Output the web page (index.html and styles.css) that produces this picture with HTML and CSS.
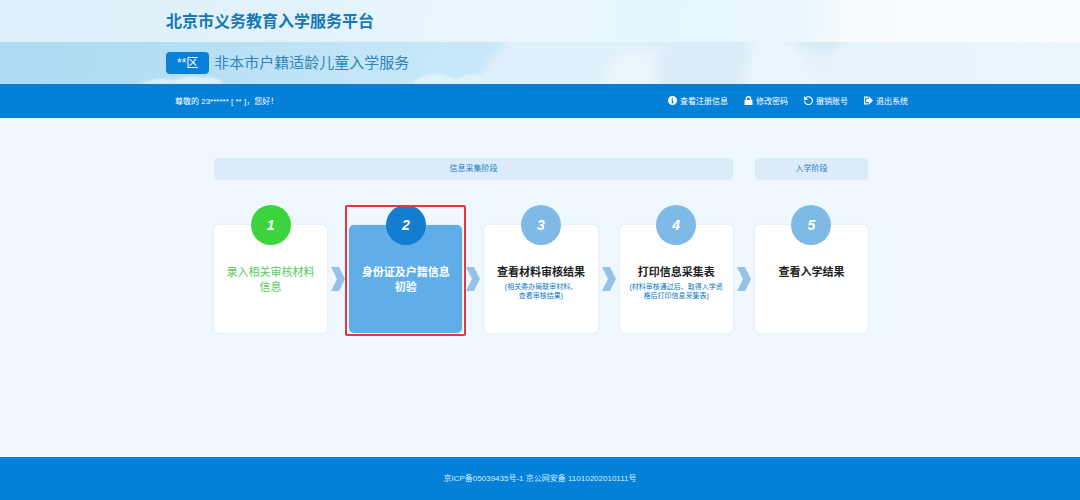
FILE: index.html
```html
<!DOCTYPE html>
<html lang="zh-CN">
<head>
    <meta charset="UTF-8">
    <meta name="viewport" content="width=device-width, initial-scale=1.0">
    <title>北京市义务教育入学服务平台</title>
    <link rel="stylesheet" href="styles.css">
</head>
<body>
    <header class="header">
        <div class="site-bar">
            <h1 class="wrap site-title">北京市义务教育入学服务平台</h1>
        </div>
        <div class="service-bar">
            <svg class="clouds" viewBox="0 0 1080 42" preserveAspectRatio="none" aria-hidden="true">
                <defs>
                    <filter id="soft" x="-20%" y="-20%" width="140%" height="140%"><feGaussianBlur stdDeviation="5"/></filter>
                    <filter id="edge"><feGaussianBlur stdDeviation="1"/></filter>
                </defs>
                <g filter="url(#soft)">
                    <path d="M470 55 Q485 22 515 -10 H675 L655 55Z" fill="#e0f0fa"/>
                    <path d="M600 50 Q605 15 625 8 Q650 8 658 20 V50Z" fill="#e9f4fb"/>
                    <path d="M670 -10 H752 L742 55 H655Z" fill="#dbecf8"/>
                    <path d="M752 -10 H785 L830 55 H742Z" fill="#eaf4fc"/>
                    <path d="M782 -5 H850 L825 11Z" fill="#d3eaf5"/>
                </g>
                <g filter="url(#edge)" fill="#def2fb">
                    <path d="M140 42 Q155 35 175 38 Q190 32 203 36 Q217 34 224 42Z"/>
                    <path d="M412 42 Q420 31 437 32 Q450 32 455 38 Q466 30 480 33 Q498 31 515 42Z"/>
                </g>
            </svg>
            <div class="wrap service">
                <span class="district">**区</span>
                <h2 class="service-title">非本市户籍适龄儿童入学服务</h2>
            </div>
        </div>
        <div class="user-bar">
            <div class="wrap user">
                <span>尊敬的 23****** [ ** ]，您好！</span>
                <nav class="menu">
                    <a href="#"><svg viewBox="0 0 16 16"><path fill-rule="evenodd" d="M8 0a8 8 0 1 0 0 16A8 8 0 0 0 8 0zM7 3h2v2H7zM6 6h3v5h1v2H6v-2h1V8H6z"/></svg>查看注册信息</a>
                    <a href="#"><svg viewBox="0 0 16 16"><path fill-rule="evenodd" d="M3 7V5a5 5 0 0 1 10 0v2h2v9H1V7zM5.500 7h5V5a2.500 2.500 0 0 0-5 0z"/></svg>修改密码</a>
                    <a href="#"><svg viewBox="0 0 16 16"><path d="M3 3.500A7 7 0 1 1 1 9" fill="none" stroke="currentColor" stroke-width="2"/><path d="M0 0v7h7z"/></svg>撤销账号</a>
                    <a href="#"><svg viewBox="0 0 16 16"><path d="M8 2H1v12h7" fill="none" stroke="currentColor" stroke-width="2"/><path d="M4 5h5V1l7 7-7 7v-4H4z"/></svg>退出系统</a>
                </nav>
            </div>
        </div>
    </header>

    <main class="main">
        <div class="phases">
            <div class="phase phase-collect">信息采集阶段</div>
            <div class="phase">入学阶段</div>
        </div>
        <ol class="steps">
            <li class="step done">
                <span class="num">1</span>
                <h3>录入相关审核材料信息</h3>
                <svg class="arrow" viewBox="0 0 14 24"><path d="M0 0h8l6 12-6 12H0l6-12z"/></svg>
            </li>
            <li class="step current">
                <span class="num">2</span>
                <h3>身份证及户籍信息初验</h3>
                <svg class="arrow" viewBox="0 0 14 24"><path d="M0 0h8l6 12-6 12H0l6-12z"/></svg>
            </li>
            <li class="step">
                <span class="num">3</span>
                <h3>查看材料审核结果</h3>
                <p>(相关委办局联审材料、<br>查看审核结果)</p>
                <svg class="arrow" viewBox="0 0 14 24"><path d="M0 0h8l6 12-6 12H0l6-12z"/></svg>
            </li>
            <li class="step">
                <span class="num">4</span>
                <h3>打印信息采集表</h3>
                <p>(材料审核通过后、取得入学资格后打印信息采集表)</p>
                <svg class="arrow" viewBox="0 0 14 24"><path d="M0 0h8l6 12-6 12H0l6-12z"/></svg>
            </li>
            <li class="step">
                <span class="num">5</span>
                <h3>查看入学结果</h3>
            </li>
        </ol>
    </main>

    <footer class="footer">京ICP备05039435号-1 京公网安备 11010202010111号</footer>
</body>
</html>
```

FILE: styles.css
```css
* {
    box-sizing: border-box;
}
body {
    display: flex;
    flex-direction: column;
    min-height: 100vh;
    margin: 0;
    font-family: "Liberation Sans", "Noto Sans CJK SC", sans-serif;
    font-size: 8px;
    background-color: #f0f8ff;
}
h1, h2, h3, p, ol {
    margin: 0;
    padding: 0;
}
.wrap {
    width: 100%;
    max-width: 748px;
    margin: 0 auto;
}

/* header */
.site-bar {
    display: flex;
    align-items: center;
    height: 42px;
    padding-bottom: 2px;
    background: linear-gradient(100deg, #def0fa 0%, #e2f2fb 28%, #eaf5fd 42%, #e6f5fd 60%, #e9f6fd 74%, #f7fbfe 79%, #f8fcfe 100%);
}
.site-title {
    font-size: 16px;
    color: #1778b8;
}
.service-bar {
    position: relative;
    display: flex;
    align-items: center;
    height: 42px;
    background: linear-gradient(100deg, #addbf3 0%, #b3def4 15%, #c2e5f7 33%, #c9e8f8 46%, #e0f0fa 52%, #dcecf8 66%, #e7f3fc 78%, #eaf5fc 100%);
}
.clouds {
    position: absolute;
    inset: 0;
    width: 100%;
    height: 100%;
}
.service {
    position: relative;
    display: flex;
    align-items: center;
    gap: 5px;
}
.district {
    padding: 0 11px;
    font-size: 12px;
    line-height: 22px;
    color: #fff;
    background-color: #0880d7;
    border-radius: 4px;
}
.service-title {
    font-size: 15px;
    font-weight: normal;
    line-height: 22px;
    color: #3183b8;
}
.user-bar {
    display: flex;
    align-items: center;
    height: 34px;
    padding-bottom: 2px;
    color: #fff;
    background-color: #0480d9;
    border-top: 1px solid #2079b9;
}
.user {
    display: flex;
    justify-content: space-between;
    padding: 0 6px 0 9px;
}
.menu {
    display: flex;
    gap: 16px;
}
.menu a {
    display: flex;
    align-items: center;
    gap: 3px;
    color: #fff;
    text-decoration: none;
}
.menu svg {
    width: 9px;
    height: 9px;
    fill: currentColor;
}

/* steps */
.main {
    flex: 1;
    width: 100%;
    max-width: 656px;
    margin: 0 auto;
    padding: 40px 0 40px 2px;
}
.phases, .steps {
    display: grid;
    grid-template-columns: repeat(5, 1fr);
    column-gap: 22px;
}
.phase {
    line-height: 22px;
    text-align: center;
    color: #2580bd;
    background-color: #dcebfa;
    border-radius: 4px;
}
.phase-collect {
    grid-column: span 4;
}
.steps {
    margin-top: 45px;
    list-style: none;
}
.step {
    position: relative;
    min-height: 108px;
    padding: 40px 9px 10px;
    text-align: center;
    color: #222;
    background-color: #fff;
    border-radius: 5px;
    box-shadow: 0 0 3px #d0e2f1;
}
.step h3 {
    font-size: 11px;
    line-height: 15px;
}
.step p {
    margin-top: 2px;
    font-size: 7px;
    line-height: 9px;
    color: #0b78be;
}
.num {
    position: absolute;
    top: -20px;
    left: calc(50% - 20px);
    width: 40px;
    font-size: 14px;
    font-style: italic;
    font-weight: bold;
    line-height: 40px;
    color: #fff;
    background-color: #7fbae7;
    border-radius: 50%;
}
.arrow {
    position: absolute;
    top: 42px;
    right: -18px;
    width: 14px;
    height: 24px;
    fill: #96c2e8;
}
.done h3 {
    font-weight: normal;
    color: #57c95b;
}
.done .num {
    background-color: #3dd53d;
}
.current {
    color: #fff;
    background-color: #60ade7;
}
.current .num {
    background-color: #137dd0;
}
/* red frame round the active step */
.current::before {
    content: "";
    position: absolute;
    inset: -20px -4px -3px;
    z-index: 1;
    border: 2px solid #e33840;
    border-radius: 2px;
}

.footer {
    height: 43px;
    line-height: 43px;
    text-align: center;
    color: #d7edff;
    background-color: #0480d9;
}
```
